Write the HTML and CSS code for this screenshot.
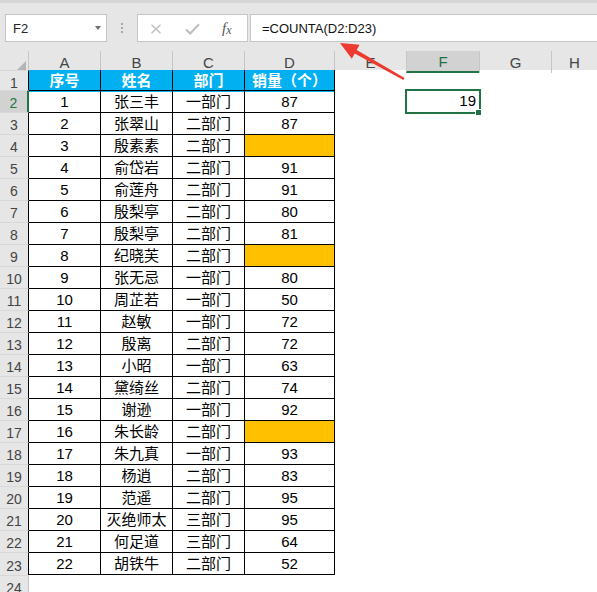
FILE: index.html
```html
<!DOCTYPE html>
<html lang="zh-CN">
<head>
<meta charset="utf-8">
<title>COUNTA</title>
<link rel="stylesheet" href="styles.css">
</head>
<body>
<div class="app">
  <div class="topstrip"></div>
  <div class="fbar">
    <div class="namebox"><span class="nm">F2</span><span class="dd"></span></div>
    <div class="grip"><i></i><i></i><i></i></div>
    <div class="fbtns">
      <svg class="bx" width="12" height="10" viewBox="0 0 12 10"><path d="M1.5 0.8 L10.5 9.2 M10.5 0.8 L1.5 9.2" stroke="#bdbdbd" stroke-width="1.4" fill="none"/></svg>
      <svg class="bc" width="15" height="12" viewBox="0 0 15 12"><path d="M1 6.5 L5.2 10.5 L14 1.2" stroke="#bdbdbd" stroke-width="2" fill="none"/></svg>
      <span class="fx">f<span class="fxx">x</span></span>
    </div>
    <div class="finput">=COUNTA(D2:D23)</div>
  </div>

  <div class="sheet">
    <div class="row hdr"><div class="corner"><span class="tri"></span></div><div>A</div><div>B</div><div>C</div><div>D</div><div>E</div><div class="hsel">F</div><div>G</div><div>H</div></div>
    <div class="row tb r1"><div class="rh">1</div><div>序号</div><div>姓名</div><div>部门</div><div>销量（个）</div></div>
    <div class="row tb d"><div class="rh sel">2</div><div>1</div><div>张三丰</div><div>一部门</div><div>87</div><div></div><div class="cur">19</div></div>
    <div class="row tb d"><div class="rh">3</div><div>2</div><div>张翠山</div><div>二部门</div><div>87</div></div>
    <div class="row tb d"><div class="rh">4</div><div>3</div><div>殷素素</div><div>二部门</div><div class="o"></div></div>
    <div class="row tb d"><div class="rh">5</div><div>4</div><div>俞岱岩</div><div>二部门</div><div>91</div></div>
    <div class="row tb d"><div class="rh">6</div><div>5</div><div>俞莲舟</div><div>二部门</div><div>91</div></div>
    <div class="row tb d"><div class="rh">7</div><div>6</div><div>殷梨亭</div><div>二部门</div><div>80</div></div>
    <div class="row tb d"><div class="rh">8</div><div>7</div><div>殷梨亭</div><div>二部门</div><div>81</div></div>
    <div class="row tb d"><div class="rh">9</div><div>8</div><div>纪晓芙</div><div>二部门</div><div class="o"></div></div>
    <div class="row tb d"><div class="rh">10</div><div>9</div><div>张无忌</div><div>一部门</div><div>80</div></div>
    <div class="row tb d"><div class="rh">11</div><div>10</div><div>周芷若</div><div>一部门</div><div>50</div></div>
    <div class="row tb d"><div class="rh">12</div><div>11</div><div>赵敏</div><div>一部门</div><div>72</div></div>
    <div class="row tb d"><div class="rh">13</div><div>12</div><div>殷离</div><div>二部门</div><div>72</div></div>
    <div class="row tb d"><div class="rh">14</div><div>13</div><div>小昭</div><div>一部门</div><div>63</div></div>
    <div class="row tb d"><div class="rh">15</div><div>14</div><div>黛绮丝</div><div>二部门</div><div>74</div></div>
    <div class="row tb d"><div class="rh">16</div><div>15</div><div>谢逊</div><div>一部门</div><div>92</div></div>
    <div class="row tb d"><div class="rh">17</div><div>16</div><div>朱长龄</div><div>二部门</div><div class="o"></div></div>
    <div class="row tb d"><div class="rh">18</div><div>17</div><div>朱九真</div><div>一部门</div><div>93</div></div>
    <div class="row tb d"><div class="rh">19</div><div>18</div><div>杨逍</div><div>二部门</div><div>83</div></div>
    <div class="row tb d"><div class="rh">20</div><div>19</div><div>范遥</div><div>二部门</div><div>95</div></div>
    <div class="row tb d"><div class="rh">21</div><div>20</div><div>灭绝师太</div><div>三部门</div><div>95</div></div>
    <div class="row tb d"><div class="rh">22</div><div>21</div><div>何足道</div><div>三部门</div><div>64</div></div>
    <div class="row tb d last"><div class="rh">23</div><div>22</div><div>胡铁牛</div><div>二部门</div><div>52</div></div>
    <div class="row"><div class="rh free">24</div></div>
  </div>

  <svg class="arrow" width="597" height="592" viewBox="0 0 597 592">
    <polygon points="340,43 359.6,44.8 356.7,50.1 404.6,78.1 403.4,80 354.7,53.5 351.8,58.8" fill="#ec3a30"/>
  </svg>
</div>
</body>
</html>
```

FILE: styles.css
```css
* { box-sizing: border-box; }

body {
  margin: 0;
  background: #ffffff;
  font-family: "Liberation Sans", "Noto Sans CJK SC", sans-serif;
}

.app {
  position: relative;
  width: 597px;
  height: 592px;
  overflow: hidden;
}

.topstrip {
  height: 3px;
  background: #d6d6d6;
}

.fbar {
  height: 48px;
  background: #e6e6e6;
  display: flex;
  align-items: flex-start;
  padding-top: 11px;
}

.namebox {
  margin-left: 5px;
  width: 102px;
  height: 28px;
  background: #fff;
  border: 1px solid #c6c6c6;
  display: flex;
  align-items: center;
  justify-content: space-between;
  padding: 0 5px 0 7px;
}

.nm {
  font-size: 13px;
  color: #262626;
}

.dd {
  width: 0;
  height: 0;
  border-left: 3.5px solid transparent;
  border-right: 3.5px solid transparent;
  border-top: 4px solid #6f6f6f;
  margin-top: -1px;
}

.grip {
  width: 30px;
  height: 28px;
  display: flex;
  flex-direction: column;
  align-items: center;
  justify-content: center;
  gap: 2px;
}

.grip i {
  display: block;
  width: 2px;
  height: 2px;
  background: #a8a8a8;
}

.fbtns {
  width: 111px;
  height: 28px;
  background: #fff;
  border: 1px solid #c6c6c6;
  display: flex;
  align-items: center;
}

.bx { margin-left: 12px; margin-top: 1px; }
.bc { margin-left: 23px; margin-top: 1px; }

.fx {
  margin-left: 22px;
  font-family: "Liberation Serif", serif;
  font-style: italic;
  font-size: 15px;
  color: #555;
  line-height: 1;
}

.fxx {
  font-size: 12px;
  position: relative;
  top: 1px;
}

.finput {
  flex: 1;
  margin-left: 2px;
  margin-right: -2px;
  height: 28px;
  background: #fff;
  border: 1px solid #c6c6c6;
  display: flex;
  align-items: center;
  padding-left: 11px;
  font-size: 13px;
  color: #111;
}

/* sheet */
.row {
  display: grid;
  grid-template-columns: 29px 71px 72px 72px 91px 71px 73px 72px 1fr;
  height: 22px;
}

.row > div {
  display: flex;
  align-items: center;
  justify-content: center;
  font-size: 15px;
  color: #000;
  line-height: 18px;
}

.hdr {
  height: 19px;
  background: #e6e6e6;
}

.hdr > div {
  color: #444;
  padding-top: 1px;
  border-left: 1px solid #c6c6c6;
}

.hdr > .corner {
  border-left: 0;
  border-right: 1px solid #c6c6c6;
  justify-content: flex-end;
  align-items: flex-end;
  padding: 0 2px 2px 0;
}

.hdr > :nth-child(2) { border-left: 0; }
.hdr > :nth-child(5) { border-right: 1px solid #c6c6c6; }
.hdr > :nth-child(6) { border-left: 0; }

.tri {
  width: 0;
  height: 0;
  border-left: 10px solid transparent;
  border-bottom: 10px solid #b4b4b4;
}

.hdr > .hsel {
  background: #d2d2d2;
  color: #217346;
  border-bottom: 2px solid #217346;
  padding-top: 2px;
}

.row > .rh {
  background: #e6e6e6;
  color: #444;
  font-size: 14px;
  border-right: 1px solid #000;
  border-top: 1px solid #d8d8d8;
  padding-top: 3px;
}

.row > .rh.sel {
  background: #d2d2d2;
  color: #217346;
  border-right: 2px solid #217346;
}

.row > .rh.free {
  border-right: 1px solid #c6c6c6;
}

.r1 { height: 20px; }

.r1 > :nth-child(n+2):nth-child(-n+5) {
  background: #00b0f0;
  color: #fff;
  font-weight: 700;
}

.tb > :nth-child(3),
.tb > :nth-child(4),
.tb > :nth-child(5) {
  border-left: 1px solid #000;
}

.tb > :nth-child(5) {
  border-right: 1px solid #000;
}

.d > :nth-child(n+2):nth-child(-n+5) {
  border-top: 1px solid #000;
}

.last { height: 23px; }

.last > :nth-child(n+2):nth-child(-n+5) {
  border-bottom: 1px solid #000;
}

.row > .o {
  background: #ffc000;
}

.row > .cur {
  position: relative;
  justify-content: flex-end;
  padding-right: 3px;
}

.cur::after {
  content: "";
  position: absolute;
  left: -1px;
  top: -1px;
  right: -2px;
  bottom: -2px;
  border: 2px solid #217346;
  z-index: 2;
}

.cur::before {
  content: "";
  position: absolute;
  right: -2px;
  bottom: -3px;
  width: 5px;
  height: 5px;
  background: #217346;
  box-shadow: 0 0 0 1px #fff;
  z-index: 3;
}

.arrow {
  position: absolute;
  left: 0;
  top: 0;
  pointer-events: none;
  z-index: 5;
}
```
